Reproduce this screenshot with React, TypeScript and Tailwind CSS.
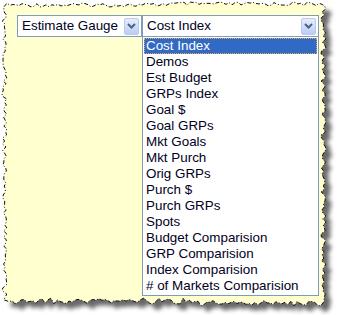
import { useMemo } from "react";

const items = [
  "Cost Index",
  "Demos",
  "Est Budget",
  "GRPs Index",
  "Goal $",
  "Goal GRPs",
  "Mkt Goals",
  "Mkt Purch",
  "Orig GRPs",
  "Purch $",
  "Purch GRPs",
  "Spots",
  "Budget Comparision",
  "GRP Comparision",
  "Index Comparision",
  "# of Markets Comparision",
];

// deterministic jitter for the torn paper edge
function rand(seed: number) {
  const x = Math.sin(seed * 12.9898) * 43758.5453;
  return x - Math.floor(x);
}

function tornPath() {
  const pts: [number, number][] = [];
  let s = 1;
  for (let x = 4; x < 324; x += 3) pts.push([x, 3 + rand(s++) * 4 - (x > 160 ? 1 : 0)]);
  for (let y = 6; y < 300; y += 3) pts.push([321 + rand(s++) * 5, y]);
  for (let x = 324; x > 4; x -= 3) pts.push([x, 298 + rand(s++) * 6 + (x > 200 ? 2 : 0)]);
  for (let y = 300; y > 6; y -= 3) pts.push([2 + rand(s++) * 5, y]);
  return "M" + pts.map((p) => `${p[0].toFixed(1)},${p[1].toFixed(1)}`).join(" L") + " Z";
}

function Chevron() {
  return (
    <svg width="9" height="6" viewBox="0 0 9 6">
      <path d="M1 1 L4.5 4.5 L8 1" fill="none" stroke="#4d6185" strokeWidth="2" />
    </svg>
  );
}

function DropButton() {
  return (
    <div className="flex h-[17px] w-[15px] items-center justify-center rounded-[2px] border border-[#b9c9ef] bg-gradient-to-b from-[#e6eefc] to-[#b9cdf6]">
      <Chevron />
    </div>
  );
}

function Select({ value, width }: { value: string; width: string }) {
  return (
    <div className={`flex h-[22px] ${width} items-center justify-between border border-[#7f9db9] bg-white pl-[4px] pr-[2px]`}>
      <span className="text-[13.4px] text-[#000022]">{value}</span>
      <DropButton />
    </div>
  );
}

export default function App() {
  const d = useMemo(() => tornPath(), []);

  return (
    <div className="relative h-[315px] w-[344px] overflow-hidden bg-white font-['Liberation_Sans',Arial,sans-serif]">
      {/* torn note paper */}
      <svg className="absolute inset-0" width="344" height="315">
        <defs>
          <filter id="blur" x="-10%" y="-10%" width="120%" height="120%">
            <feGaussianBlur stdDeviation="2" />
          </filter>
        </defs>
        <path d={d} transform="translate(6,6)" fill="#505050" filter="url(#blur)" opacity="0.85" />
        <path d={d} fill="#ffffcf" stroke="#111" strokeWidth="1" strokeDasharray="4 2 1 2" />
      </svg>

      <div className="relative flex flex-col pl-[17px] pt-[15px]">
        <div className="flex">
          <Select value="Estimate Gauge" width="w-[125px]" />
          <Select value="Cost Index" width="w-[177px]" />
        </div>
        <div className="ml-[125px] w-[177px] border border-[#7f9db9] border-t-0 bg-white p-px">
          {items.map((it, i) => (
            <div
              key={it}
              className={
                i === 0
                  ? "h-4 border border-dotted border-[#e9a94a] bg-[#316ac5] pl-[1px] text-[13.4px] leading-[14px] text-white"
                  : "h-4 pl-[2px] text-[13.4px] leading-4 text-[#000022]"
              }
            >
              {it}
            </div>
          ))}
        </div>
      </div>
    </div>
  );
}
